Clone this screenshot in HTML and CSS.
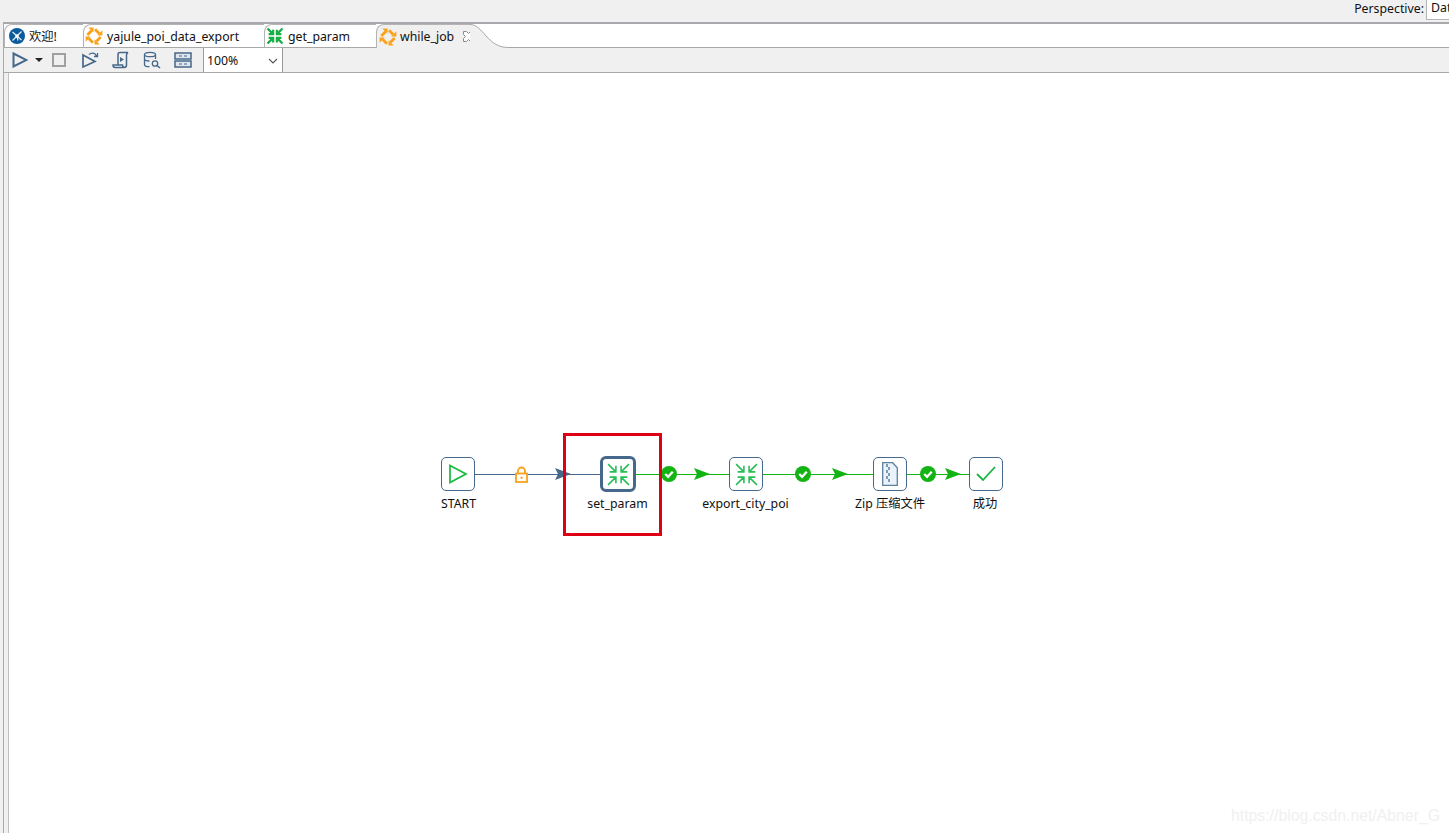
FILE: index.html
```html
<!DOCTYPE html>
<html lang="zh">
<head>
<meta charset="utf-8">
<title>while_job</title>
<link rel="stylesheet" href="styles.css">
</head>
<body>
<svg class="defs" width="0" height="0">
  <defs>
    <symbol id="in" viewBox="0 0 24 24">
      <path d="M2 2l7.500 7.500M9.500 3.500v6h-6M22 2l-7.500 7.500M14.500 3.500v6h6M2 22l7.500-7.500M9.500 20.500v-6h-6M22 22l-7.500-7.500M14.500 20.500v-6h6" fill="none" stroke="currentColor"/>
    </symbol>
    <g id="pin">
      <path d="M2.300 8L6.500 3.800" stroke="#f9a11b" stroke-width="2.800" fill="none"/>
      <path d="M3.300.6h5.200v5.200z" fill="#f9a11b"/>
    </g>
    <symbol id="out" viewBox="0 0 18 18">
      <use href="#pin"/>
      <use href="#pin" transform="rotate(90 9 9)"/>
      <use href="#pin" transform="rotate(180 9 9)"/>
      <use href="#pin" transform="rotate(270 9 9)"/>
    </symbol>
    <symbol id="ok" viewBox="0 0 17 17">
      <circle cx="8.500" cy="8.500" r="8.500" fill="#12b312"/>
      <path d="M4.500 8.500l3 3 5-5.500" fill="none" stroke="#fff" stroke-width="2.400"/>
    </symbol>
    <symbol id="head" viewBox="0 0 16 12">
      <path d="M0 0l16 6-16 6 3-6z" fill="currentColor"/>
    </symbol>
  </defs>
</svg>

<header class="topbar">
  <span class="persp-label">Perspective:</span>
  <span class="persp-box">Dat</span>
</header>

<div class="editor">
  <nav class="tabs">
    <div class="tab tab-first">
      <svg class="tab-icon" viewBox="0 0 16 16">
        <circle cx="8" cy="8" r="8" fill="#0a5a9c"/>
        <path d="M3.500 4l9 8M12.500 3.500l-9 9M8 8l1 4.500" stroke="#e8f0f8" stroke-width="1.200" fill="none"/>
        <circle cx="8" cy="8" r="1.800" fill="#fff"/>
      </svg>
      <span>欢迎!</span>
    </div>
    <div class="tab tab-yajule">
      <svg class="tab-icon-lg"><use href="#out"/></svg>
      <span>yajule_poi_data_export</span>
    </div>
    <div class="tab tab-param">
      <svg class="tab-icon-lg green"><use href="#in"/></svg>
      <span>get_param</span>
    </div>
    <div class="tab tab-active">
      <svg class="tab-icon-lg"><use href="#out"/></svg>
      <span>while_job</span>
      <svg class="close" viewBox="0 0 11 11">
        <path d="M.5.500h3l2 2 2-2h3v3l-2 2 2 2v3h-3l-2-2-2 2h-3v-3l2-2-2-2z" fill="#fff" stroke="#8a8a8a"/>
      </svg>
      <svg class="curve" viewBox="0 0 40 24" preserveAspectRatio="none">
        <path d="M0 0C14 0 18 23 40 23V24H0z" fill="#f0f0f0"/>
        <path d="M0 .5C14 .5 18 23.500 40 23.500" fill="none" stroke="#a8a8a8"/>
      </svg>
    </div>
    <div class="tab-rest"></div>
  </nav>

  <div class="toolbar">
    <svg class="tool tool-run" viewBox="0 0 16 16"><path d="M1.500 1.500l13 6.500-13 6.500z" fill="none" stroke="#46688a" stroke-width="2"/></svg>
    <span class="caret"></span>
    <span class="stop"></span>
    <svg class="tool tool-debug" viewBox="0 0 18 18"><path d="M2 4l12 6.500L2 16z" fill="none" stroke="#46688a" stroke-width="1.700"/><path d="M8 3.500c3-2.500 6-1.500 7.500 1.500M16.500 2v3.500H13" fill="none" stroke="#46688a" stroke-width="1.300"/></svg>
    <svg class="tool tool-scroll" viewBox="0 0 18 18"><path d="M6 14V3.500C6 2 7 1.500 8 1.500h8c-1 .5-1.500 1.200-1.500 2.500v10c0 1.500-1 2.500-2.500 2.500H3c-1.200 0-2-.8-2-2.500h9.500c0 1 .5 2 1.500 2.500" fill="none" stroke="#46688a" stroke-width="1.500"/><path d="M8 6l4 2.500L8 11z" fill="#46688a"/></svg>
    <svg class="tool tool-db" viewBox="0 0 18 18"><ellipse cx="7" cy="3.500" rx="5.500" ry="2.200" fill="none" stroke="#46688a" stroke-width="1.300"/><path d="M1.500 3.500v10c0 1.200 2.200 2.200 5 2.200M12.500 3.500V8M1.500 8c0 1.200 2.500 2 5 2" fill="none" stroke="#46688a" stroke-width="1.300"/><circle cx="12" cy="12.500" r="2.700" fill="none" stroke="#46688a" stroke-width="1.300"/><path d="M14 14.500l3 2.500" stroke="#46688a" stroke-width="1.600"/></svg>
    <svg class="tool tool-rows" viewBox="0 0 18 16"><path d="M1 1h16v6H1zM1 9h16v6H1z" fill="#dfe6ee" stroke="#46688a" stroke-width="1.500"/><path d="M5 4h3M10 4h3M5 12h3M10 12h3" stroke="#46688a"/></svg>
    <div class="zoom-select">
      <span>100%</span>
      <svg class="chev" viewBox="0 0 10 6"><path d="M1 1l4 4 4-4" fill="none" stroke="#555" stroke-width="1.100"/></svg>
    </div>
  </div>

  <main class="canvas">
    <div class="wire wire-blue wire-a"></div>
    <div class="wire wire-green wire-b"></div>
    <div class="wire wire-green wire-c"></div>
    <div class="wire wire-green wire-d"></div>

    <svg class="arrow arrow-1"><use href="#head"/></svg>
    <svg class="arrow arrow-2"><use href="#head"/></svg>
    <svg class="arrow arrow-3"><use href="#head"/></svg>
    <svg class="arrow arrow-4"><use href="#head"/></svg>

    <svg class="lock" viewBox="0 0 13 17"><path d="M3 8V5a3.500 3.500 0 0 1 7 0v3" fill="none" stroke="#f9a11b" stroke-width="1.800"/><rect x="1" y="7.500" width="11" height="8.500" fill="#fff" stroke="#f9a11b" stroke-width="1.800"/><rect x="5.500" y="10.800" width="2" height="2" fill="#f9a11b"/></svg>

    <svg class="badge badge-1"><use href="#ok"/></svg>
    <svg class="badge badge-2"><use href="#ok"/></svg>
    <svg class="badge badge-3"><use href="#ok"/></svg>

    <div class="node node-start">
      <svg class="glyph-play" viewBox="0 0 20 20"><path d="M2 1.500l16 8.500-16 8.500z" fill="none" stroke="#19b840" stroke-width="1.700"/></svg>
    </div>
    <div class="node node-set">
      <svg class="glyph-in"><use href="#in"/></svg>
    </div>
    <div class="node node-export">
      <svg class="glyph-in"><use href="#in"/></svg>
    </div>
    <div class="node node-zip">
      <svg class="glyph-zip" viewBox="0 0 16 24"><path d="M.7.700h10l4.600 5v17.600H.7z" fill="#eaf3fb" stroke="#5f7f9c" stroke-width="1.300"/><path d="M5 2v3M7 5v3M5 8v3M7 11v3M5 14v3M7 17v3" stroke="#5f7f9c"/></svg>
    </div>
    <div class="node node-done">
      <svg class="glyph-check" viewBox="0 0 20 16"><path d="M1 8l6 6L19 1" fill="none" stroke="#17b63e" stroke-width="1.800"/></svg>
    </div>

    <span class="label label-start">START</span>
    <span class="label label-set">set_param</span>
    <span class="label label-export">export_city_poi</span>
    <span class="label label-zip">Zip 压缩文件</span>
    <span class="label label-done">成功</span>

    <div class="highlight"></div>
    <span class="watermark">https://blog.csdn.net/Abner_G</span>
  </main>
</div>
</body>
</html>
```

FILE: styles.css
```css
* { box-sizing: border-box; }
html, body { margin: 0; height: 100%; }
body {
  width: 1449px;
  height: 833px;
  overflow: hidden;
  background: #f0f0f0;
  font-family: "Noto Sans", "Noto Sans CJK SC", sans-serif;
  font-size: 12.300px;
  color: #111;
  display: flex;
  flex-direction: column;
}
.defs { display: block; height: 0; }

.topbar {
  height: 22px;
  flex: none;
  display: flex;
  justify-content: flex-end;
  align-items: flex-start;
  overflow: hidden;
}
.persp-label { margin-top: 1px; margin-right: 2px; line-height: 15px; }
.persp-box {
  width: 23px;
  height: 20px;
  border: 1px solid #b4b4b4;
  border-right: 0;
  border-top: 0;
  background: #fff;
  padding-left: 4px;
  line-height: 16px;
  overflow: hidden;
  flex: none;
}

.editor {
  flex: 1;
  margin-left: 3px;
  border-top: 2px solid #a9a9ad;
  border-left: 1px solid #a9a9ad;
  display: flex;
  flex-direction: column;
  min-height: 0;
}

.tabs { height: 24px; display: flex; flex: none; background: #fff; }
.tab {
  display: flex;
  align-items: center;
  height: 24px;
  border-left: 1px solid #b4b4b4;
  border-top: 1px solid #b4b4b4;
  border-bottom: 1px solid #a8a8a8;
  border-top-left-radius: 8px;
  background: #fff;
  flex: none;
}
.tab-first { width: 79px; padding-left: 4px; gap: 4px; }
.tab-yajule { width: 181px; padding-left: 1px; gap: 4px; }
.tab-param { width: 112px; padding-left: 1px; gap: 4px; }
.tab-active {
  width: 94px;
  padding-left: 2px;
  gap: 3px;
  background: #f0f0f0;
  border-bottom: 0;
  position: relative;
}
.tab-rest { flex: 1; border-bottom: 1px solid #a8a8a8; margin-left: 38px; }
.tab-icon { width: 16px; height: 16px; flex: none; }
.tab-icon-lg { width: 18px; height: 18px; flex: none; }
.green { color: #17ae45; stroke-width: 3; }
.close { width: 11px; height: 11px; margin-left: 6px; flex: none; }
.curve { position: absolute; left: 93px; top: -1px; width: 38px; height: 24px; }

.toolbar {
  height: 25px;
  flex: none;
  display: flex;
  align-items: center;
  background: #f0f0f0;
  border-bottom: 1px solid #a8a8a8;
  padding-left: 8px;
}
.tool { flex: none; }
.tool-run { width: 16px; height: 16px; }
.caret {
  margin-left: 7px;
  border: 4px solid transparent;
  border-top: 4px solid #222;
  border-bottom: 0;
  flex: none;
}
.stop {
  width: 14px;
  height: 14px;
  margin-left: 9px;
  border: 2px solid #a0a0a0;
  flex: none;
}
.tool-debug { width: 18px; height: 18px; margin-left: 15px; }
.tool-scroll { width: 18px; height: 18px; margin-left: 13px; }
.tool-db { width: 18px; height: 18px; margin-left: 13px; }
.tool-rows { width: 18px; height: 16px; margin-left: 13px; }
.zoom-select {
  width: 80px;
  height: 24px;
  margin-left: 11px;
  background: #fff;
  border-left: 1px solid #9a9a9a;
  border-right: 1px solid #9a9a9a;
  display: flex;
  align-items: center;
  justify-content: space-between;
  padding: 1px 3px 0;
  flex: none;
}
.chev { width: 10px; height: 6px; margin-right: 1px; }

.canvas {
  flex: 1;
  margin-left: 4px;
  background: #fff;
  border-left: 1px solid #c0c0c0;
  position: relative;
}

/* canvas coordinates: origin at page (9, 73) */
.wire { position: absolute; height: 1px; top: 401px; }
.wire-blue { background: #46688a; left: 466px; width: 125px; }
.wire-green { background: #12b312; }
.wire-b { left: 627px; width: 93px; }
.wire-c { left: 754px; width: 110px; }
.wire-d { left: 898px; width: 62px; }

.arrow { position: absolute; width: 16px; height: 12px; top: 395px; color: #12b312; }
.arrow-1 { left: 546px; color: #46688a; }
.arrow-2 { left: 685px; }
.arrow-3 { left: 823px; }
.arrow-4 { left: 936px; }

.lock { position: absolute; left: 506px; top: 393px; width: 13px; height: 17px; }
.badge { position: absolute; width: 16px; height: 16px; top: 393px; }
.badge-1 { left: 652px; }
.badge-2 { left: 786px; }
.badge-3 { left: 911px; }

.node {
  position: absolute;
  top: 384px;
  width: 34px;
  height: 34px;
  background: #fff;
  border: 1px solid #46688a;
  border-radius: 5px;
  display: flex;
  align-items: center;
  justify-content: center;
  color: #28bd57;
  stroke-width: 1.500;
}
.node-start { left: 432px; }
.node-set { left: 591px; top: 383px; width: 36px; height: 36px; border-width: 3px; border-radius: 6px; }
.node-export { left: 720px; }
.node-zip { left: 864px; }
.node-done { left: 960px; }
.glyph-play { width: 20px; height: 20px; }
.glyph-in { width: 25px; height: 25px; flex: none; }
.glyph-zip { width: 16px; height: 24px; }
.glyph-check { width: 20px; height: 16px; }

.label {
  position: absolute;
  top: 423px;
  line-height: 16px;
  white-space: nowrap;
  transform: translateX(-50%);
}
.label-start { left: 449.500px; }
.label-set { left: 608.500px; }
.label-export { left: 736.500px; }
.label-zip { left: 881px; }
.label-done { left: 976px; }

.highlight {
  position: absolute;
  left: 554px;
  top: 360px;
  width: 99px;
  height: 103px;
  border: 3px solid #e00016;
}
.watermark {
  position: absolute;
  right: 9px;
  top: 733px;
  font-family: "Liberation Sans", sans-serif;
  font-size: 15.800px;
  color: #f0f0f0;
  line-height: 20px;
}
```
